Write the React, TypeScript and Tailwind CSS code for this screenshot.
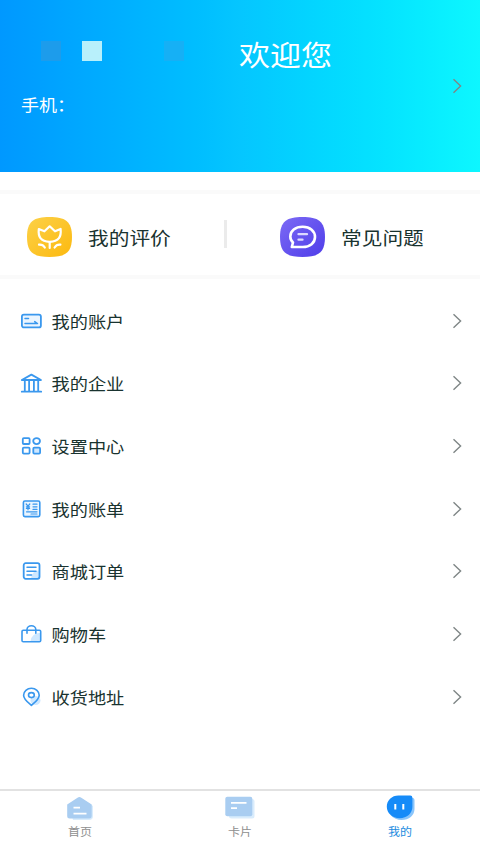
import type { ReactNode } from 'react';

function Chevron() {
  return (
    <svg className="h-4 w-2.5 flex-shrink-0" viewBox="0 0 10 16" fill="none" stroke="#7f8686" strokeWidth="1.4">
      <path d="M1.5 1.2 8.6 8l-7.1 6.8" />
    </svg>
  );
}

function Icon({ children }: { children: ReactNode }) {
  return (
    <svg
      className="h-6 w-6 flex-shrink-0"
      viewBox="0 0 24 24"
      fill="none"
      stroke="#3a98ee"
      strokeWidth="1.8"
      strokeLinecap="round"
      strokeLinejoin="round"
    >
      {children}
    </svg>
  );
}

const menu = [
  {
    label: '我的账户',
    icon: (
      <Icon>
        <rect x="1.9" y="5.6" width="19" height="12.8" rx="2" fill="#eaf5ff" />
        <path d="M5 9.4h3.500M5 14.600h12.500l-2.800-2" strokeWidth="1.500" />
      </Icon>
    ),
  },
  {
    label: '我的企业',
    icon: (
      <Icon>
        <path d="M1.8 9 11.4 3.600l9.600 5.400z" />
        <path d="M4.800 9.500v10.500M9.100 9.500v10.500M13.900 9.500v10.500M18.200 9.500v10.500M1.800 20.700h19.400" />
      </Icon>
    ),
  },
  {
    label: '设置中心',
    icon: (
      <Icon>
        <rect x="2.8" y="4.2" width="6.8" height="5.8" rx="1" />
        <ellipse cx="16.6" cy="7.1" rx="3.4" ry="3" />
        <rect x="2.8" y="13.700" width="6.800" height="5.900" rx="1" />
        <rect x="13.300" y="13.700" width="6.800" height="5.900" rx="1" fill="#cfe8ff" />
      </Icon>
    ),
  },
  {
    label: '我的账单',
    icon: (
      <Icon>
        <rect x="3.4" y="4" width="16.4" height="15.6" rx="1.5" fill="#eaf5ff" strokeWidth="1.6" />
        <path
          d="m6.2 7 1.8 2.2L9.800 7M8 9.200v3.600M6.400 9.800h3.200M6.400 11.400h3.200M13 7.200h4M13 9.800h4M13 12.400h4M6.500 14.800h10.500M11 17h6"
          strokeWidth="1.2"
        />
      </Icon>
    ),
  },
  {
    label: '商城订单',
    icon: (
      <Icon>
        <path d="M20 11.5v7.9H11a8 8 0 0 1 9-7.9z" fill="#cfe8ff" stroke="none" />
        <rect x="3.7" y="4.200" width="15.800" height="15.600" rx="2" />
        <path d="M7 8.300h9M7 12.200h9M7 16.100h4.500" strokeWidth="1.500" />
      </Icon>
    ),
  },
  {
    label: '购物车',
    icon: (
      <Icon>
        <path d="M20.500 11v8.500H10.500a9 9 0 0 1 10-8.500z" fill="#cfe8ff" stroke="none" />
        <rect x="2" y="8.200" width="18.700" height="11.500" rx="1.300" strokeWidth="1.600" />
        <path d="M7 11.200V7.600a4.400 3.800 0 0 1 8.800 0v3.600" strokeWidth="1.600" />
      </Icon>
    ),
  },
  {
    label: '收货地址',
    icon: (
      <Icon>
        <ellipse cx="15.500" cy="15.500" rx="5" ry="4.500" fill="#cfe8ff" stroke="none" />
        <path
          d="M11.400 20.400C7.500 17 3.600 14.200 3.600 10.200c0-3.900 3.500-6.900 7.800-6.900s7.800 3 7.800 6.900c0 4-3.900 6.800-7.800 10.200z"
          strokeWidth="1.600"
        />
        <ellipse cx="11.400" cy="10.100" rx="2.900" ry="2.500" strokeWidth="1.600" />
      </Icon>
    ),
  },
];

const tabs = [
  {
    label: '首页',
    color: 'text-[#8f8f8f]',
    icon: (
      <svg className="h-7 w-8" viewBox="0 0 32 28">
        <path d="M5 12 17 4l12 8v10a4 4 0 0 1-4 4H9z" fill="#d9ecfc" />
        <path
          d="M3.200 10.500 13.500 3.700a3.400 3.400 0 0 1 3.800 0L27.700 10.500V22a2.500 2.500 0 0 1-2.500 2.500H5.700A2.500 2.500 0 0 1 3.200 22z"
          fill="#a9cdf1"
        />
        <path d="M9.500 13.700h6.500M9.500 19.700h13" stroke="#fff" strokeWidth="1.700" />
      </svg>
    ),
  },
  {
    label: '卡片',
    color: 'text-[#8f8f8f]',
    icon: (
      <svg className="h-7 w-8" viewBox="0 0 32 28">
        <rect x="5" y="5" width="25.500" height="19.500" rx="2.500" fill="#d9ecfc" />
        <rect x="1.300" y="2.800" width="27" height="19.500" rx="2" fill="#a9cdf1" />
        <path d="M7 8.900h15.500M7 14.200h6" stroke="#fff" strokeWidth="1.800" />
      </svg>
    ),
  },
  {
    label: '我的',
    color: 'text-[#238ce0]',
    icon: (
      <svg className="h-7 w-8" viewBox="0 0 32 28">
        <path d="M15 3.800h13a2.500 2.500 0 0 1 2.500 2.500V15c0 6.500-5.500 11-13 11-4 0-8-1.500-11-5z" fill="#8ac5fb" />
        <path
          d="M14.500 1.500H26.200a2.200 2.200 0 0 1 2.200 2.200V12.700c0 6.500-5.400 11.500-12.700 11.500S2.800 19 2.800 12.700 7.700 1.500 14.500 1.500z"
          fill="#168bf8"
        />
        <path d="M11.300 10v5.500M19.300 10v5.500" stroke="#fff" strokeWidth="2" />
      </svg>
    ),
  },
];

export default function App() {
  return (
    <main className="flex h-[853px] w-[480px] flex-col overflow-hidden bg-white font-['Noto_Sans_CJK_SC',sans-serif] text-[#19332f]">
      {/* Welcome header */}
      <header className="flex h-[172px] flex-shrink-0 items-center justify-between bg-gradient-to-r from-[#0098ff] via-[#05c6ff] to-[#0df7ff] pr-[18px] pl-[21px] text-white">
        <div className="h-full">
          <div className="flex h-[91px] items-center pt-[11px] pl-5">
            <div className="flex w-[198px] flex-shrink-0">
              <span className="h-5 w-5 bg-[#1d9ceb]" />
              <span className="ml-[21px] h-5 w-5 bg-[#b8f0fb]" />
              <span className="ml-[62px] h-5 w-5 bg-[#16b0f5]" />
            </div>
            <h1 className="scale-y-90 pt-1.5 text-[31px] leading-none font-normal whitespace-nowrap">欢迎您</h1>
          </div>
          <p className="scale-y-90 text-[18px] leading-[27px]">手机：</p>
        </div>
        <Chevron />
      </header>

      {/* Shortcuts */}
      <section className="mt-[18px] flex h-[89px] flex-shrink-0 items-center border-y-4 border-[#fafafa] pt-1 text-[20.7px]">
        <div className="flex w-[224px] items-center gap-4 pl-[27px]">
          <svg
            className="h-10 w-[45px]"
            viewBox="0 0 45 40"
            fill="none"
            stroke="#fff"
            strokeWidth="2.2"
            strokeLinecap="round"
            strokeLinejoin="round"
          >
            <defs>
              <linearGradient id="gold" x1="0" y1="0" x2="1" y2="1">
                <stop stopColor="#fcd148" />
                <stop offset="1" stopColor="#fcb90f" />
              </linearGradient>
            </defs>
            <path d="M22.5 0C38 0 45 4 45 20s-7 20-22.500 20S0 36 0 20 7 0 22.500 0z" fill="url(#gold)" stroke="none" />
            <path d="M11.800 12l5.600 2.300 5.300-5 5.300 5 5.600-2.300c.8 7.500-1.600 12.800-10.900 12.800S11 19.500 11.800 12z" />
            <path d="M22.700 25v6M12 27.600c2.500-.3 4.500.7 5.800 2.900M33.400 27.600c-2.500-.3-4.500.7-5.800 2.900" />
          </svg>
          <span className="scale-y-90 pt-0.5 whitespace-nowrap">我的评价</span>
        </div>
        <div className="mb-1.5 h-7 w-[3px] bg-[#ebebeb]" />
        <div className="flex items-center gap-4 pl-[53px]">
          <svg
            className="h-10 w-[45px]"
            viewBox="0 0 45 40"
            fill="none"
            stroke="#fff"
            strokeWidth="2.6"
            strokeLinecap="round"
            strokeLinejoin="round"
          >
            <defs>
              <linearGradient id="violet" x1="0" y1="0" x2="1" y2="1">
                <stop stopColor="#7c6af5" />
                <stop offset="1" stopColor="#4f3de9" />
              </linearGradient>
            </defs>
            <path d="M22.5 0C38 0 45 4 45 20s-7 20-22.500 20S0 36 0 20 7 0 22.500 0z" fill="url(#violet)" stroke="none" />
            <path d="M11.800 30l1.200-4.500c-1.700-1.500-2.700-3.500-2.700-6 0-5.800 5-9.700 12.400-9.700s12.300 4.200 12.300 10.100-5 10.100-12.300 10.100z" />
            <path d="M18.500 17.200h8.500M18.500 22.700h4" stroke="#ddd9ff" strokeWidth="2.3" />
          </svg>
          <span className="scale-y-90 pt-0.5 whitespace-nowrap">常见问题</span>
        </div>
      </section>

      {/* Menu */}
      <ul className="flex-1 pt-[10.5px]">
        {menu.map((item) => (
          <li key={item.label} className="flex h-[62.67px] items-center pr-[18px] pl-5">
            {item.icon}
            <span className="ml-[7.5px] flex-1 scale-y-90 text-[18.2px] leading-6">{item.label}</span>
            <Chevron />
          </li>
        ))}
      </ul>

      {/* Bottom tabs */}
      <nav className="grid h-[64px] flex-shrink-0 grid-cols-3 border-t-2 border-[#e2e2e2]">
        {tabs.map((tab) => (
          <div key={tab.label} className={`flex flex-col items-center pt-[3px] text-[12px] ${tab.color}`}>
            {tab.icon}
            <span className="scale-y-90 leading-[18px]">{tab.label}</span>
          </div>
        ))}
      </nav>
    </main>
  );
}
